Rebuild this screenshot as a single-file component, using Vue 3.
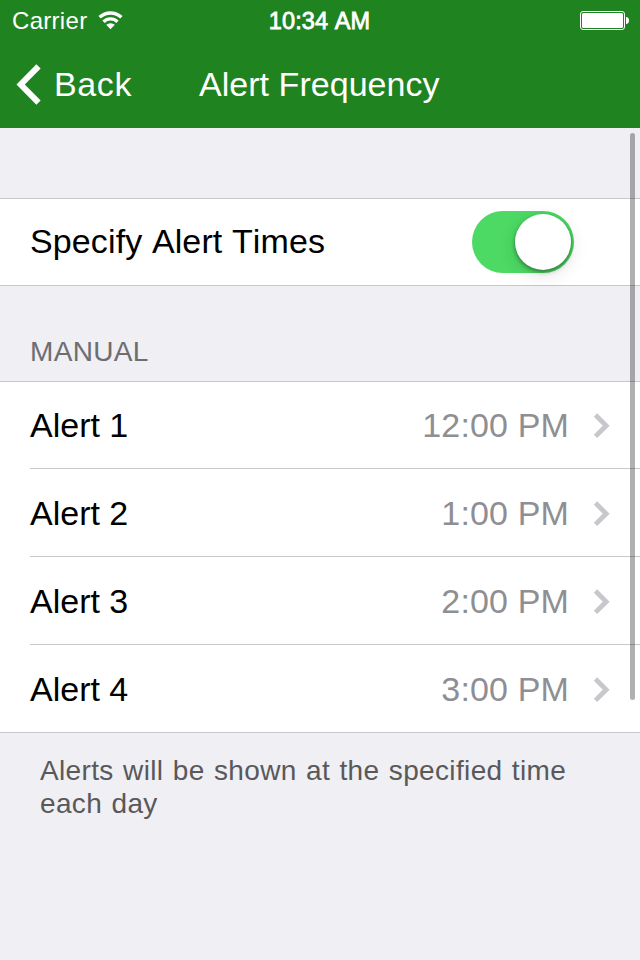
<script setup>
import { ref } from 'vue'

const specifyTimes = ref(true)
const alerts = [
  { name: 'Alert 1', time: '12:00 PM' },
  { name: 'Alert 2', time: '1:00 PM' },
  { name: 'Alert 3', time: '2:00 PM' },
  { name: 'Alert 4', time: '3:00 PM' },
]
</script>

<template>
  <div class="screen">
    <header class="header">
      <div class="status">
        <div class="status-left">
          <span class="carrier">Carrier</span>
          <svg class="wifi" width="26" height="20" viewBox="0 0 26 20">
            <g fill="none" stroke="#fff" stroke-width="3.4">
              <path d="M1.6 7.3A15.8 15.8 0 0 1 23.4 7.3" />
              <path d="M5.5 11.7A10 10 0 0 1 19.5 11.7" />
            </g>
            <path d="M8.2 14.8A6.4 6.4 0 0 1 16.8 14.8L12.5 19.2Z" fill="#fff" />
          </svg>
        </div>
        <span class="clock">10:34 AM</span>
        <div class="status-right">
          <svg width="50" height="20" viewBox="0 0 50 20">
            <rect x="0.5" y="0.5" width="44" height="18" rx="2.5" fill="none" stroke="#fff" />
            <rect x="2" y="2" width="41" height="15" rx="1.5" fill="#fff" />
            <path d="M46 6Q49 6.3 49 9.5Q49 12.7 46 13Z" fill="#fff" />
          </svg>
        </div>
      </div>
      <nav class="nav">
        <a class="back">
          <svg width="26" height="42" viewBox="0 0 26 42">
            <path d="M22.5 3.4L4.7 21.5L22.5 39.6" fill="none" stroke="#fff" stroke-width="6" />
          </svg>
          <span class="back-label">Back</span>
        </a>
        <h1 class="title">Alert Frequency</h1>
      </nav>
    </header>

    <main class="content">
      <section class="group">
        <div class="row switch-row">
          <span class="specify">Specify Alert Times</span>
          <button
            class="switch"
            :class="{ on: specifyTimes }"
            aria-label="Specify Alert Times"
            @click="specifyTimes = !specifyTimes"
          >
            <span class="knob"></span>
          </button>
        </div>
      </section>

      <h2 class="section-title">MANUAL</h2>

      <section class="group">
        <div v-for="alert in alerts" :key="alert.name" class="row alert-row">
          <span class="name">{{ alert.name }}</span>
          <span class="time">{{ alert.time }}</span>
          <svg class="chevron" width="18" height="26" viewBox="0 0 18 26">
            <path d="M2.5 2L13.2 12.7L2.5 23.4" fill="none" stroke="#c7c7cc" stroke-width="4.8" />
          </svg>
        </div>
      </section>

      <p class="footnote">Alerts will be shown at the specified time<br />each day</p>
      <div class="scrollbar"></div>
    </main>
  </div>
</template>

<style>
body {
  margin: 0;
  background: #efeff4;
}
</style>

<style scoped>
.screen {
  width: 640px;
  height: 960px;
  overflow: hidden;
  background: #efeff4;
  color: #000;
  font-family: "Liberation Sans", Arial, sans-serif;
  font-size: 34px;
  font-kerning: none;
}

.header {
  height: 128px;
  background: #1f831f;
  color: #fff;
}

.status {
  display: grid;
  grid-template-columns: 1fr auto 1fr;
  height: 40px;
  padding: 0 10px 0 12px;
  font-size: 24px;
  line-height: 42px;
}

.status-left {
  display: flex;
  align-items: flex-start;
}

.carrier {
  width: 75px;
  letter-spacing: 0.3px;
}

.wifi {
  margin: 10px 0 0 11px;
}

.clock {
  margin-left: -3px;
  font-size: 23.5px;
  letter-spacing: 0.1px;
  -webkit-text-stroke: 0.8px #fff;
}

.status-right {
  display: flex;
  justify-content: flex-end;
  align-items: flex-start;
  padding-top: 11px;
}

.nav {
  display: grid;
  grid-template-columns: 199px 1fr;
  height: 88px;
  line-height: 88px;
}

.back {
  display: flex;
  align-items: center;
  padding-left: 16px;
}

.back-label {
  margin-left: 12px;
  letter-spacing: 0.6px;
}

.title {
  margin: 0;
  font-size: 34px;
  font-weight: normal;
  letter-spacing: 0.04px;
  white-space: nowrap;
}

.content {
  position: relative;
  padding-top: 70px;
}

.group {
  border-top: 1px solid #c8c7cc;
  border-bottom: 1px solid #c8c7cc;
  background: #fff;
}

.row {
  display: flex;
  align-items: center;
  margin-left: 30px;
  white-space: nowrap;
}

.switch-row {
  height: 86px;
  padding-right: 66px;
  justify-content: space-between;
}

.specify {
  padding-bottom: 2px;
  letter-spacing: 0.12px;
}

.switch {
  display: flex;
  width: 102px;
  height: 62px;
  padding: 3px;
  border: 0;
  border-radius: 31px;
  background: #e5e5e5;
}

.switch.on {
  justify-content: flex-end;
  background: #4cd964;
}

.knob {
  width: 56px;
  height: 56px;
  border-radius: 50%;
  background: #fff;
  box-shadow: 0 2px 4px rgba(0, 0, 0, 0.4), 0 5px 18px rgba(0, 0, 0, 0.12);
}

.section-title {
  margin: 0;
  height: 95px;
  padding-left: 30px;
  color: #6d6d72;
  font-size: 28px;
  font-weight: normal;
  letter-spacing: 0.35px;
  line-height: 131px;
}

.alert-row {
  height: 87px;
  border-bottom: 1px solid #c8c7cc;
}

.alert-row:first-child {
  height: 86px;
}

.alert-row:last-child {
  border-bottom: 0;
}

.alert-row + .alert-row .name,
.alert-row + .alert-row .time {
  padding-top: 1px;
}

.time {
  margin-left: auto;
  color: #8e8e93;
  letter-spacing: 0.15px;
}

.chevron {
  margin: 1px 29px 0 24px;
}

.alert-row + .alert-row .chevron {
  margin-top: 2px;
}

.footnote {
  margin: 0;
  padding: 21px 40px 0;
  color: #59595b;
  font-size: 28px;
  letter-spacing: 0.36px;
  word-spacing: 1.2px;
  line-height: 33px;
  white-space: nowrap;
}

.scrollbar {
  position: absolute;
  top: 5px;
  right: 5px;
  width: 5px;
  height: 567px;
  border-radius: 3px;
  background: rgba(0, 0, 0, 0.31);
}
</style>
